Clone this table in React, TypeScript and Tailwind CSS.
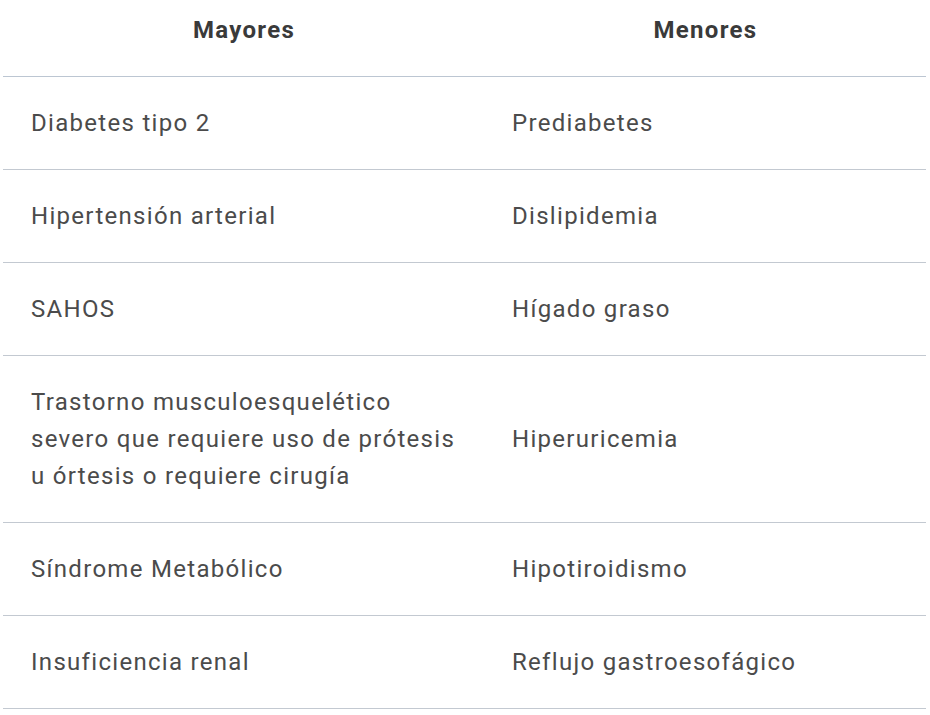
import React from 'react';

type Row = { mayor: string; menor: string };

const rows: Row[] = [
  { mayor: 'Diabetes tipo 2', menor: 'Prediabetes' },
  { mayor: 'Hipertensión arterial', menor: 'Dislipidemia' },
  { mayor: 'SAHOS', menor: 'Hígado graso' },
  {
    mayor: 'Trastorno musculoesquelético severo que requiere uso de prótesis u órtesis o requiere cirugía',
    menor: 'Hiperuricemia',
  },
  { mayor: 'Síndrome Metabólico', menor: 'Hipotiroidismo' },
  { mayor: 'Insuficiencia renal', menor: 'Reflujo gastroesofágico' },
];

const App: React.FC = () => {
  return (
    <div className="w-[930px] h-[715px] bg-white overflow-hidden font-['Roboto',sans-serif]">
      <table className="ml-[3px] w-[923px] border-collapse text-[24px] leading-[37px] tracking-[1.3px]">
        <thead>
          <tr className="border-b-[1.5px] border-[#bcc6d2]">
            <th className="w-[482px] pt-[12px] pb-[27px] font-bold text-[#3a3a3a] text-center">Mayores</th>
            <th className="pt-[12px] pb-[27px] font-bold text-[#3a3a3a] text-center">Menores</th>
          </tr>
        </thead>
        <tbody>
          {rows.map((r) => (
            <tr key={r.mayor} className="border-b-[1.5px] border-[#c3c9d1]">
              <td className="py-[27.5px] pl-[28px] pr-[20px] text-[#4b4b4b] align-middle">{r.mayor}</td>
              <td className="py-[27.5px] pl-[27px] pr-[20px] text-[#4b4b4b] align-middle">{r.menor}</td>
            </tr>
          ))}
        </tbody>
      </table>
    </div>
  );
};

export default App;
